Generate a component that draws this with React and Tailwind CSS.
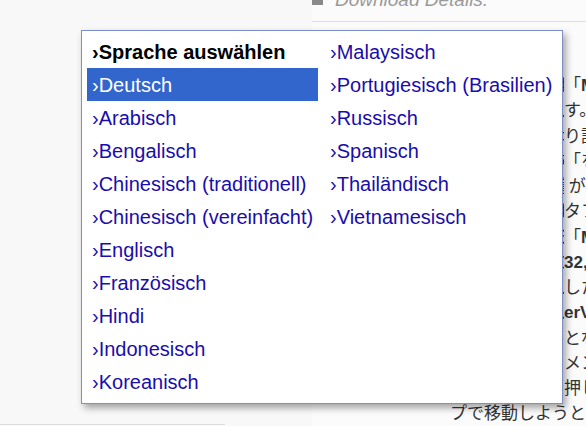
const left = [
  "Deutsch",
  "Arabisch",
  "Bengalisch",
  "Chinesisch (traditionell)",
  "Chinesisch (vereinfacht)",
  "Englisch",
  "Französisch",
  "Hindi",
  "Indonesisch",
  "Koreanisch",
];

const right = [
  "Malaysisch",
  "Portugiesisch (Brasilien)",
  "Russisch",
  "Spanisch",
  "Thailändisch",
  "Vietnamesisch",
];

// hidden part of each line sits under the menu; only the tail shows
const lines = [
  ["このページでは", "「", "Mu"],
  ["ダウンロードしま", "す。", ""],
  ["言語パックによ", "り設", ""],
  ["ユーザーインタ", "「をー", ""],
  ["ファイルの一覧", " が", ""],
  ["詳細については", "タフ", ""],
  ["メニューにある", "「", "Mo"],
  ["ファイルは次の", "", "32,"],
  ["ダウンロードし", "した", ""],
  ["インストールし", "", "erVe"],
  ["が必要なこと", "とな", ""],
  ["使用できるコ", "メン", ""],
  ["ボタンを押し", "押し", ""],
  [null, "プで移動しようとし", ""],
];

function Item({ label, active, bold }) {
  return (
    <div
      className={
        "h-[33px] flex items-center px-[5px] whitespace-nowrap text-[20px] " +
        (active
          ? "bg-[#3366cc] text-white"
          : bold
          ? "text-black font-bold"
          : "text-[#1a0dab]")
      }
    >
      ›{label}
    </div>
  );
}

export default function App() {
  return (
    <div
      className="relative w-[586px] h-[426px] overflow-hidden bg-[#f8f8f8]"
      style={{ fontFamily: "'Liberation Sans', Arial, sans-serif" }}
    >
      <div className="flex h-full">
        <div className="w-[312px] shrink-0 flex flex-col justify-end">
          <div className="w-[225px] border-t border-[#dddddd] h-[2px]" />
        </div>
        <div className="flex-1 min-w-0 overflow-hidden bg-[#fbfbfb]">
          <div className="h-[22px] border-b border-[#dddddd] flex items-end">
            <div className="flex items-center gap-[12px] pb-[12px] whitespace-nowrap">
              <div className="w-[11px] h-[11px] bg-[#8a8a8a]" />
              <span className="italic text-[19px] text-[#9a9a9a] leading-none">
                Download Details.
              </span>
            </div>
          </div>
          <div
            className="mt-[51px] ml-[138px] text-[17px] leading-[25px] text-[#333333] whitespace-nowrap"
            style={{ fontFamily: "'Liberation Sans', 'Noto Sans CJK JP', sans-serif" }}
          >
            {lines.map(([hidden, text, b], i) => (
              <div key={i} className="h-[25.25px]">
                {hidden !== null && (
                  <span className="inline-block w-[114px] overflow-hidden align-top">
                    {hidden}
                  </span>
                )}
                {text}
                {b && <span className="font-bold">{b}</span>}
              </div>
            ))}
          </div>
        </div>
      </div>

      <div className="absolute left-[81px] top-[30px] w-[482px] h-[374px] bg-white border border-[#7d8fc6] shadow-[3px_4px_7px_rgba(0,0,0,0.35)] pt-[4px] pl-[5px] flex gap-[7px]">
        <div className="w-[231px]">
          <Item label="Sprache auswählen" bold />
          {left.map((l, i) => (
            <Item key={l} label={l} active={i === 0} />
          ))}
        </div>
        <div className="flex-1">
          {right.map((l) => (
            <Item key={l} label={l} />
          ))}
        </div>
      </div>
    </div>
  );
}
